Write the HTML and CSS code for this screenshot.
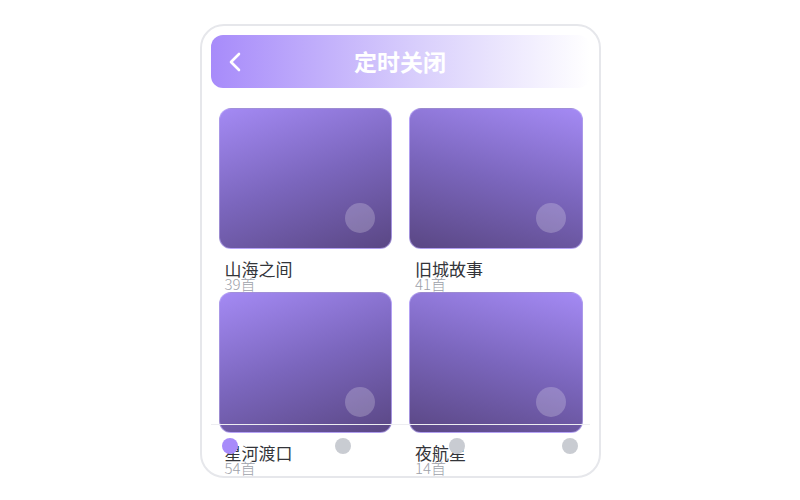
FILE: index.html
```html
<!DOCTYPE html>
<html lang="zh-CN">

<head>
    <meta charset="UTF-8">
    <meta name="viewport" content="width=device-width, initial-scale=1.0">
    <title>定时关闭</title>
    <link rel="stylesheet" href="styles.css">
</head>

<body>
    <div class="phone">
        <div class="header">
            <button class="back">
                <svg width="14" height="20" viewBox="0 0 14 20">
                    <path d="M11 2 L3 10 L11 18" fill="none" stroke="#fff" stroke-width="2.6" stroke-linecap="round" stroke-linejoin="round" />
                </svg>
            </button>
            <h1 class="title">定时关闭</h1>
        </div>

        <ul class="list">
            <li class="item">
                <div class="cover cover-l"><span class="play"></span></div>
                <p class="name">山海之间</p>
                <p class="count">39首</p>
            </li>
            <li class="item">
                <div class="cover cover-r"><span class="play"></span></div>
                <p class="name">旧城故事</p>
                <p class="count">41首</p>
            </li>
            <li class="item">
                <div class="cover cover-l"><span class="play"></span></div>
                <p class="name">星河渡口</p>
                <p class="count">54首</p>
            </li>
            <li class="item">
                <div class="cover cover-r"><span class="play"></span></div>
                <p class="name">夜航星</p>
                <p class="count">14首</p>
            </li>
        </ul>

        <div class="tabbar">
            <span class="dot active"></span>
            <span class="dot"></span>
            <span class="dot"></span>
            <span class="dot"></span>
        </div>
    </div>
</body>

</html>
```

FILE: styles.css
```css
* {
    margin: 0;
    padding: 0;
    box-sizing: border-box;
}

body {
    background-color: #fff;
    font-family: "Noto Sans CJK SC", "Noto Sans", sans-serif;
}

.phone {
    position: relative;
    width: 401px;
    height: 454px;
    margin: 24px auto 0;
    border: 2px solid #e6e7eb;
    border-radius: 24px;
    background-color: #fff;
    overflow: hidden;
}

.header {
    position: relative;
    display: flex;
    align-items: center;
    justify-content: center;
    height: 53px;
    margin: 9px 9px 0;
    border-radius: 12px;
    background: linear-gradient(90deg, #a78bfa 0%, #d9cffc 55%, #ffffff 100%);
}

.header .back {
    position: absolute;
    left: 17px;
    top: 50%;
    transform: translateY(-50%);
    display: flex;
    border: none;
    background: none;
}

.header .title {
    color: #fff;
    font-size: 23px;
    font-weight: 700;
    line-height: 1;
}

.list {
    display: grid;
    grid-template-columns: 1fr 1fr;
    column-gap: 17px;
    row-gap: 1px;
    padding: 20px 16px 0 17px;
    list-style: none;
}

.cover {
    position: relative;
    height: 141px;
    border-radius: 12px;
    border: 1px solid rgba(196, 181, 253, 0.6);
}

.cover-l {
    background: linear-gradient(160deg, #a48af4 0%, #7b66bd 50%, #5a4784 100%);
}

.cover-r {
    background: linear-gradient(195deg, #a48af4 0%, #7b66bd 50%, #5a4784 100%);
}

.cover .play {
    position: absolute;
    right: 16px;
    bottom: 15px;
    width: 30px;
    height: 30px;
    border-radius: 50%;
    background-color: rgba(255, 255, 255, 0.22);
}

.item .name {
    margin-top: 12px;
    padding-left: 6px;
    font-size: 17px;
    line-height: 16px;
    color: #33353a;
}

.item .count {
    padding-left: 6px;
    font-size: 15px;
    font-weight: 300;
    line-height: 14px;
    color: #9da1a9;
}

.tabbar {
    position: absolute;
    left: 9px;
    right: 9px;
    top: 398px;
    display: flex;
    justify-content: space-between;
    padding: 13px 11px 0;
    border-top: 1px solid #ededf1;
}

.tabbar .dot {
    width: 16px;
    height: 16px;
    border-radius: 50%;
    background-color: #c9ccd2;
}

.tabbar .dot.active {
    background-color: #a78bfa;
}
```
